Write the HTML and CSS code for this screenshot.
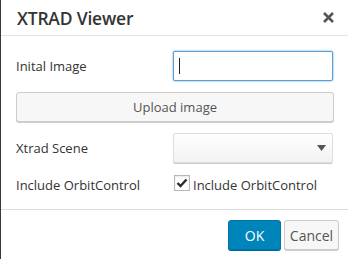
FILE: index.html
```html
<!DOCTYPE html>
<html>
<head>
<meta charset="utf-8">
<link rel="stylesheet" href="styles.css">
</head>
<body>
<div class="dialog">
  <div class="header">
    <div class="title">XTRAD Viewer</div>
    <div class="close">
      <svg width="13" height="13" viewBox="0 0 13 13"><path d="M2 2 L11 11 M11 2 L2 11" stroke="#555" stroke-width="2.6" stroke-linecap="butt"/></svg>
    </div>
  </div>
  <div class="body">
    <div class="row">
      <div class="label">Inital Image</div>
      <div class="input focused"><span class="caret"></span></div>
    </div>
    <div class="upload">Upload image</div>
    <div class="row">
      <div class="label">Xtrad Scene</div>
      <div class="input select">
        <svg width="9" height="6" viewBox="0 0 9 6"><path d="M0 0 H9 L4.5 6 Z" fill="#555"/></svg>
      </div>
    </div>
    <div class="row check-row">
      <div class="label">Include OrbitControl</div>
      <div class="check">
        <span class="box"><svg width="12" height="10" viewBox="0 0 12 10"><path d="M1.5 5 L4.5 8 L10.5 1.5" stroke="#2a2a2a" stroke-width="2.4" fill="none"/></svg></span>
        <span>Include OrbitControl</span>
      </div>
    </div>
  </div>
  <div class="footer">
    <div class="btn ok">OK</div>
    <div class="btn cancel">Cancel</div>
  </div>
</div>
</body>
</html>
```
FILE: styles.css
```css
html, body {
  margin: 0;
  padding: 0;
  background: #fff;
}
body {
  font-family: "Open Sans", "Noto Sans", sans-serif;
  font-size: 13px;
  color: #333;
}
.dialog {
  width: 347px;
  height: 259px;
  border-left: 1px solid #3a3a3a;
  background: #fff;
  display: flex;
  flex-direction: column;
}
.header {
  height: 35px;
  border-bottom: 1px solid #e2e2e2;
  display: flex;
  align-items: center;
  justify-content: space-between;
  padding: 0 13px 0 16px;
}
.title {
  font-size: 17.5px;
  font-weight: 600;
  color: #333;
  letter-spacing: -0.2px;
  margin-top: 1px;
}
.close {
  display: flex;
  width: 13px;
  height: 13px;
}
.body {
  padding: 15px 15px 0 15px;
  display: flex;
  flex-direction: column;
  gap: 11px;
}
.row {
  display: flex;
  align-items: center;
}
.label {
  width: 157px;
}
.input {
  box-sizing: border-box;
  width: 160px;
  height: 30px;
  border: 1px solid #ddd;
  border-radius: 2px;
  background: #fff;
  display: flex;
  align-items: center;
}
.input.focused {
  border-color: #5b9dd9;
  box-shadow: 0 0 2px rgba(30,140,190,.8);
}
.caret {
  width: 1px;
  height: 16px;
  background: #222;
  margin-left: 5px;
}
.select {
  background: linear-gradient(#fff, #f2f2f2);
  border-color: #ddd;
  justify-content: flex-end;
  padding-right: 6px;
  box-shadow: 0 1px 0 #ccc;
}
.upload {
  box-sizing: border-box;
  height: 30px;
  width: 318px;
  border: 1px solid #ccc;
  border-radius: 3px;
  background: #f7f7f7;
  box-shadow: 0 1px 0 #ccc;
  display: flex;
  align-items: center;
  justify-content: center;
  color: #555;
}
.check-row {
  height: 22px;
}
.check {
  display: flex;
  align-items: center;
  gap: 3px;
  margin-left: 1px;
}
.box {
  box-sizing: border-box;
  width: 16px;
  height: 16px;
  border: 1px solid #b4b9be;
  background: #fff;
  display: flex;
  align-items: center;
  justify-content: center;
  box-shadow: inset 0 1px 2px rgba(0,0,0,.1);
  margin-top: -4px;
}
.footer {
  margin-top: auto;
  height: 50px;
  border-top: 1px solid #dcdcdc;
  display: flex;
  justify-content: flex-end;
  align-items: flex-start;
  padding: 10px 9px 0 0;
  gap: 3px;
  box-sizing: border-box;
}
.btn {
  box-sizing: border-box;
  height: 30px;
  display: flex;
  align-items: center;
  justify-content: center;
  border-radius: 3px;
  font-size: 14px;
}
.ok {
  width: 53px;
  background: #0085ba;
  border: 1px solid #0073aa;
  box-shadow: 0 1px 0 #006799;
  color: #fff;
}
.cancel {
  width: 55px;
  background: #f7f7f7;
  border: 1px solid #ccc;
  box-shadow: 0 1px 0 #ccc;
  color: #555;
}
```
